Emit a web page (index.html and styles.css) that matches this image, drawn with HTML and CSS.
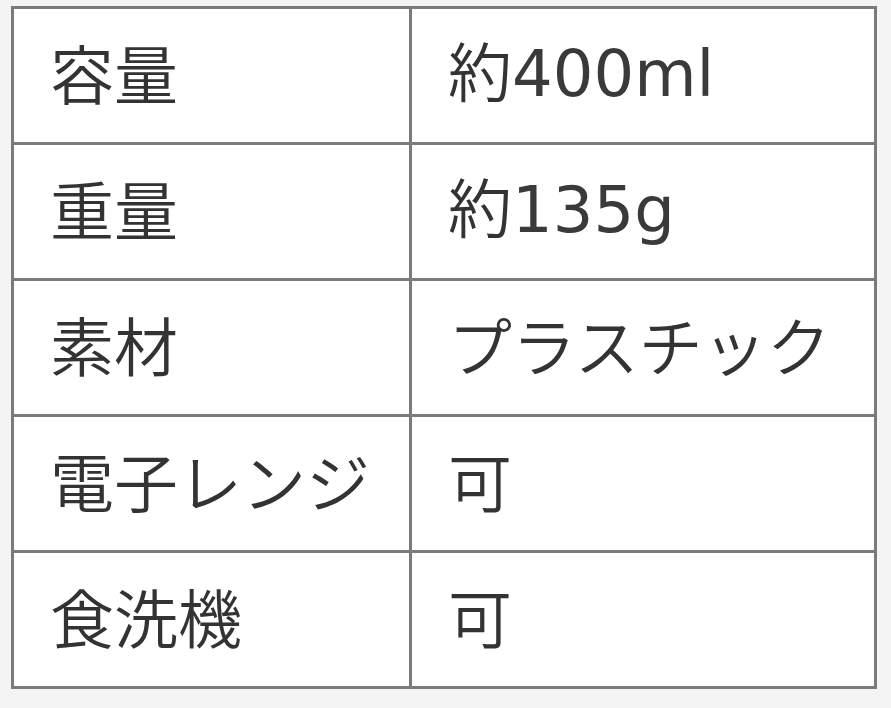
FILE: index.html
```html
<!DOCTYPE html>
<html lang="ja">
<head>
<meta charset="utf-8">
<link rel="stylesheet" href="styles.css">
</head>
<body>
<table class="spec">
  <tr><th>容量</th><td>約<span class="lat">400ml</span></td></tr>
  <tr><th>重量</th><td>約<span class="lat">135g</span></td></tr>
  <tr><th>素材</th><td>プラスチック</td></tr>
  <tr><th>電子レンジ</th><td>可</td></tr>
  <tr><th>食洗機</th><td>可</td></tr>
</table>
</body>
</html>
```
FILE: styles.css
```css
html, body {
  margin: 0;
  padding: 0;
  background: #f4f4f4;
}
body {
  padding: 6px 0 0 11px;
}
.spec {
  border-collapse: collapse;
  background: #ffffff;
  width: 866px;
  font-family: "Noto Sans CJK JP", sans-serif;
  font-size: 64px;
  color: #333333;
}
.spec th, .spec td {
  border: 3px solid #7b7b7b;
  height: 123px;
  padding: 0 0 10px 36px;
  text-align: left;
  font-weight: 350;
  vertical-align: middle;
  line-height: 1;
}
.spec th {
  width: 359px;
}
.spec .lat {
  font-family: "DejaVu Sans", sans-serif;
  font-weight: 400;
  color: #3a3a3a;
}
```
